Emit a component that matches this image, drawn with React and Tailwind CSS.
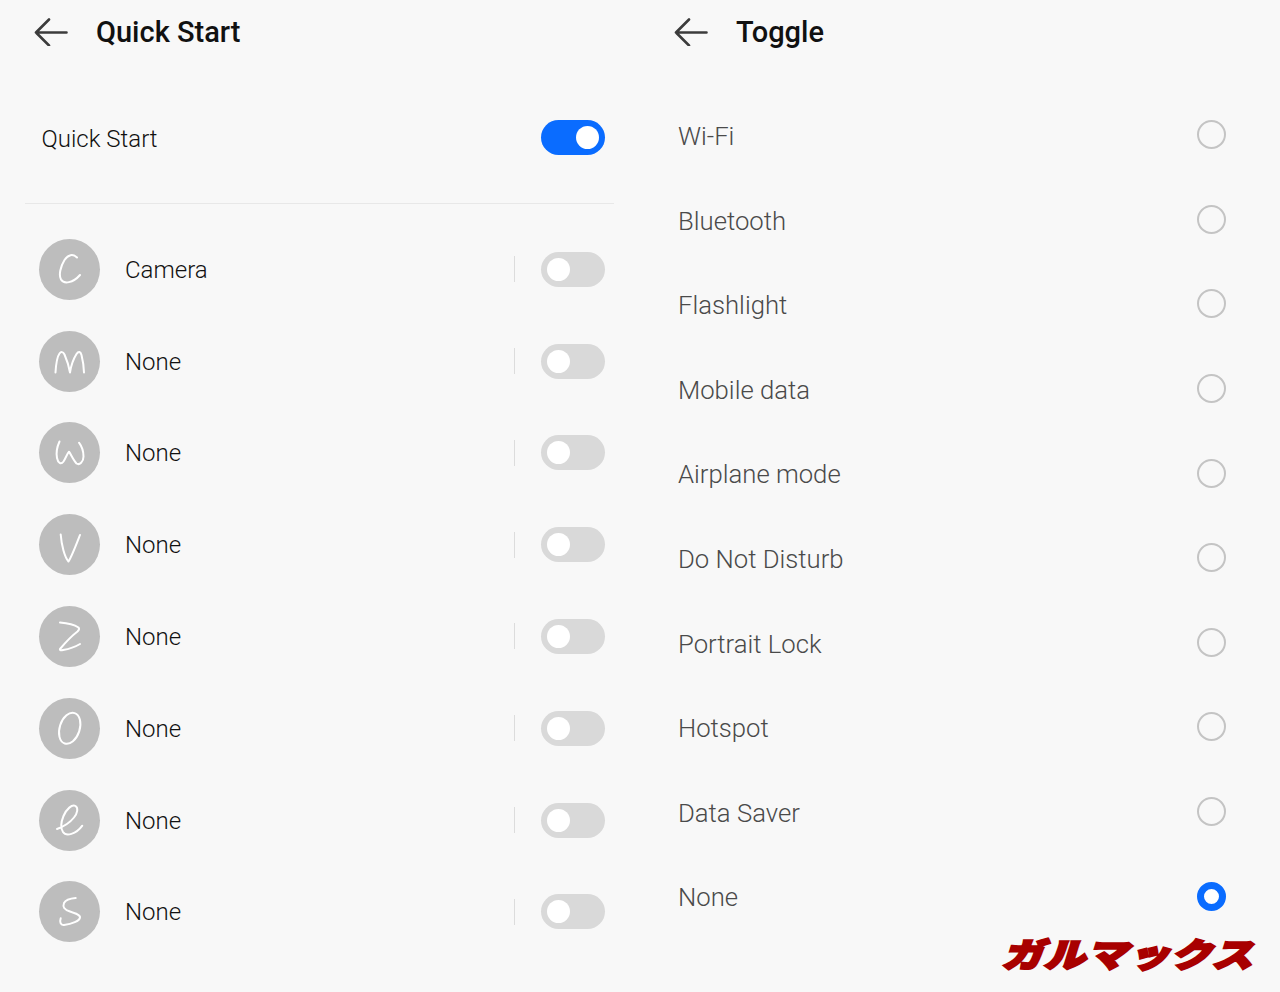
const Back = () => (
  <svg width="34" height="28" viewBox="0 0 34 28" fill="none" stroke="#3c3c3c" strokeWidth="2.6" strokeLinecap="round" strokeLinejoin="round" className="shrink-0">
    <path d="M15 1.5 2 14.5 15 27.5M2 14.5h30.5" />
  </svg>
);

const glyphs = {
  c: "M38 18.5C34 14.5 29 15.5 25.5 21 21.5 27.5 19.5 36 22 40.5 25 45.5 34 44 41 36",
  m: "M16.5 41.5C17 33 18 26 20.5 22.5 22 20.5 24 20.5 25.5 23.5 27.5 28 30 36 31 41.5 32 35 35 27 37.5 23 39.5 20 41.5 20.5 42.5 24 44 30 44.8 36 45 41.5",
  w: "M20.5 19.5C18 25 17 31 18 36 19 41 22 43 24.5 39.5 26.5 36.5 28 32 30 29.7 32 32.5 34.5 38.5 37.5 41.5 40.5 43.5 44.5 40 44.5 34.5 44.5 29.5 42.5 24 40 20.7",
  v: "M21.7 20.5C22.5 31 25.5 43 29.5 47.5 33 42 37.5 30 41 21",
  z: "M21 16.5C27 17 35 18.5 39.5 21.5 40.5 22.5 40 24 38.5 25.5 32 30.5 26 37 21 43 20.5 44.5 22 44.5 24 44 30 43 36 41 41 38",
  e: "M18 39C25 36.5 31 32.5 35 27.5 38.5 23 39.5 18 36.5 16 33 14 27.5 19 24.5 26 22 32 21.5 38 24 42 27 46.5 37 44.5 43.3 35.7",
  s: "M36.7 17C31 17.5 26.5 19 25 22 23.5 26 25 28.5 31 30.5 37 32.5 41.5 34 41 36.5 40.5 40 33 43 25 44 21.5 44.5 20.5 41 21.7 37.3",
};

const Gesture = ({ k }) => (
  <div className="flex h-[61px] w-[61px] shrink-0 items-center justify-center rounded-full bg-[#bdbdbd]">
    <svg width="61" height="61" viewBox="0 0 61 61" fill="none" stroke="#fff" strokeWidth="2" strokeLinecap="round" strokeLinejoin="round">
      {k === "o" ? <ellipse cx="30.7" cy="30.3" rx="10" ry="16" transform="rotate(18 30.7 30.3)" /> : <path d={glyphs[k]} />}
    </svg>
  </div>
);

const Switch = ({ on }) => (
  <div className={`flex h-[35px] w-16 shrink-0 items-center rounded-full px-[6px] ${on ? "justify-end bg-[#0a6cff]" : "justify-start bg-[#d9d9d9]"}`}>
    <div className="h-[23px] w-[23px] rounded-full bg-white" />
  </div>
);

const rows = [
  ["c", "Camera"],
  ["m", "None"],
  ["w", "None"],
  ["v", "None"],
  ["z", "None"],
  ["o", "None"],
  ["e", "None"],
  ["s", "None"],
];

const toggles = ["Wi-Fi", "Bluetooth", "Flashlight", "Mobile data", "Airplane mode", "Do Not Disturb", "Portrait Lock", "Hotspot", "Data Saver", "None"];

const Header = ({ title }) => (
  <div className="flex h-16 items-center gap-[28px] pl-[34px]">
    <Back />
    <h1 className="text-[29px] leading-none font-medium text-[#111]">{title}</h1>
  </div>
);

export default function App() {
  return (
    <div className="relative grid h-[992px] w-[1280px] grid-cols-2 overflow-hidden bg-[#f8f8f8] font-['Roboto',sans-serif]">
      <section>
        <Header title="Quick Start" />
        <div className="mt-[36px] flex h-[74px] items-center justify-between pr-[35px] pl-[41.5px]">
          <span className="pt-[4px] text-[24px] font-light text-[#111]">Quick Start</span>
          <Switch on />
        </div>
        <div className="mt-[29px] ml-[25px] h-px w-[589px] bg-[#e8e8e8]" />
        <div className="mt-[19.4px]">
          {rows.map(([k, label], i) => (
            <div key={i} className="flex h-[91.8px] items-center pr-[35px] pl-[38.5px]">
              <Gesture k={k} />
              <span className="ml-[25.5px] flex-1 pt-[1px] text-[24px] font-light text-[#111]">{label}</span>
              <div className="mr-[26px] h-[26px] w-px bg-[#dcdcdc]" />
              <Switch />
            </div>
          ))}
        </div>
      </section>
      <section>
        <Header title="Toggle" />
        <div className="mt-[28.5px]">
          {toggles.map((t, i) => (
            <div key={t} className="flex h-[84.6px] items-center justify-between pr-[54px] pl-[38px]">
              <span className="pt-[3px] text-[25.7px] font-light text-[#4a4a4a]">{t}</span>
              {i === toggles.length - 1 ? (
                <div className="h-[29px] w-[29px] rounded-full border-[7px] border-[#0a6cff] bg-white" />
              ) : (
                <div className="h-[29px] w-[29px] rounded-full border-2 border-[#c4c4c4]" />
              )}
            </div>
          ))}
        </div>
      </section>
      <div className="absolute right-[22px] bottom-[24px] origin-right scale-x-[1.24] -skew-x-[14deg] font-['Noto_Sans_CJK_JP',sans-serif] text-[33px] leading-[30px] font-black tracking-[1px] text-[#a80000] [-webkit-text-stroke:2.5px_#a80000]">
        ガルマックス
      </div>
    </div>
  );
}
